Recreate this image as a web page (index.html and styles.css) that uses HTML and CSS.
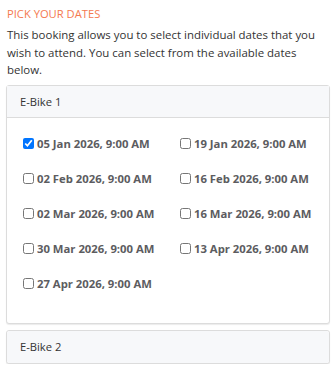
FILE: index.html
```html
<!DOCTYPE html>
<html lang="en">

<head>
    <meta charset="UTF-8">
    <meta name="viewport" content="width=device-width, initial-scale=1.0">
    <title>Pick your dates</title>
    <link rel="stylesheet" href="styles.css">
</head>

<body>
    <div class="sayfa">
        <h4 class="baslik">PICK YOUR DATES</h4>
        <p class="aciklama">This booking allows you to select individual dates that you wish to attend. You can select from the available dates below.</p>

        <div class="kart">
            <div class="kart-baslik">E-Bike 1</div>
            <div class="kart-govde">
                <label class="tarih"><input type="checkbox" checked> 05 Jan 2026, 9:00 AM</label>
                <label class="tarih"><input type="checkbox"> 19 Jan 2026, 9:00 AM</label>
                <label class="tarih"><input type="checkbox"> 02 Feb 2026, 9:00 AM</label>
                <label class="tarih"><input type="checkbox"> 16 Feb 2026, 9:00 AM</label>
                <label class="tarih"><input type="checkbox"> 02 Mar 2026, 9:00 AM</label>
                <label class="tarih"><input type="checkbox"> 16 Mar 2026, 9:00 AM</label>
                <label class="tarih"><input type="checkbox"> 30 Mar 2026, 9:00 AM</label>
                <label class="tarih"><input type="checkbox"> 13 Apr 2026, 9:00 AM</label>
                <label class="tarih"><input type="checkbox"> 27 Apr 2026, 9:00 AM</label>
            </div>
        </div>

        <div class="kart">
            <div class="kart-baslik kapali">E-Bike 2</div>
        </div>
    </div>
</body>

</html>
```

FILE: styles.css
```css
/* Resetleme */
* {
    margin: 0;
    padding: 0;
    box-sizing: border-box;
}

body {
    font-family: "Open Sans", "Liberation Sans", sans-serif;
    color: #333;
    background-color: #fff;
}

.sayfa {
    padding: 6px 4px 0 6px;
}

/* Baslik ve aciklama */
.baslik {
    font-size: 11.2px;
    font-weight: normal;
    color: #f47a50;
    line-height: 16px;
    padding-left: 1px;
}

.aciklama {
    margin-top: 4px;
    font-size: 11.45px;
    line-height: 17.5px;
    padding-left: 1px;
}

/* Kartlar */
.kart {
    margin-top: 6px;
    border: 1px solid #dcdcdc;
    border-radius: 3px;
    box-shadow: 0 1px 1px rgba(0, 0, 0, 0.08);
    background-color: #fff;
}

.kart-baslik {
    height: 32px;
    line-height: 32px;
    padding-left: 13px;
    font-size: 11.2px;
    background-color: #f7f8fa;
    border-bottom: 1px solid #dcdcdc;
}

.kart-baslik.kapali {
    border-bottom: none;
    border-radius: 3px;
}

.kart-govde {
    display: grid;
    grid-template-columns: 157px 140px;
    grid-auto-rows: 35px;
    padding: 8px 0 22px 16px;
}

.tarih {
    display: flex;
    align-items: center;
    gap: 3px;
    font-size: 11.3px;
    font-weight: bold;
    color: #5c5c60;
    white-space: nowrap;
}

.tarih input {
    width: 11px;
    height: 11px;
    margin: 0;
}
```
